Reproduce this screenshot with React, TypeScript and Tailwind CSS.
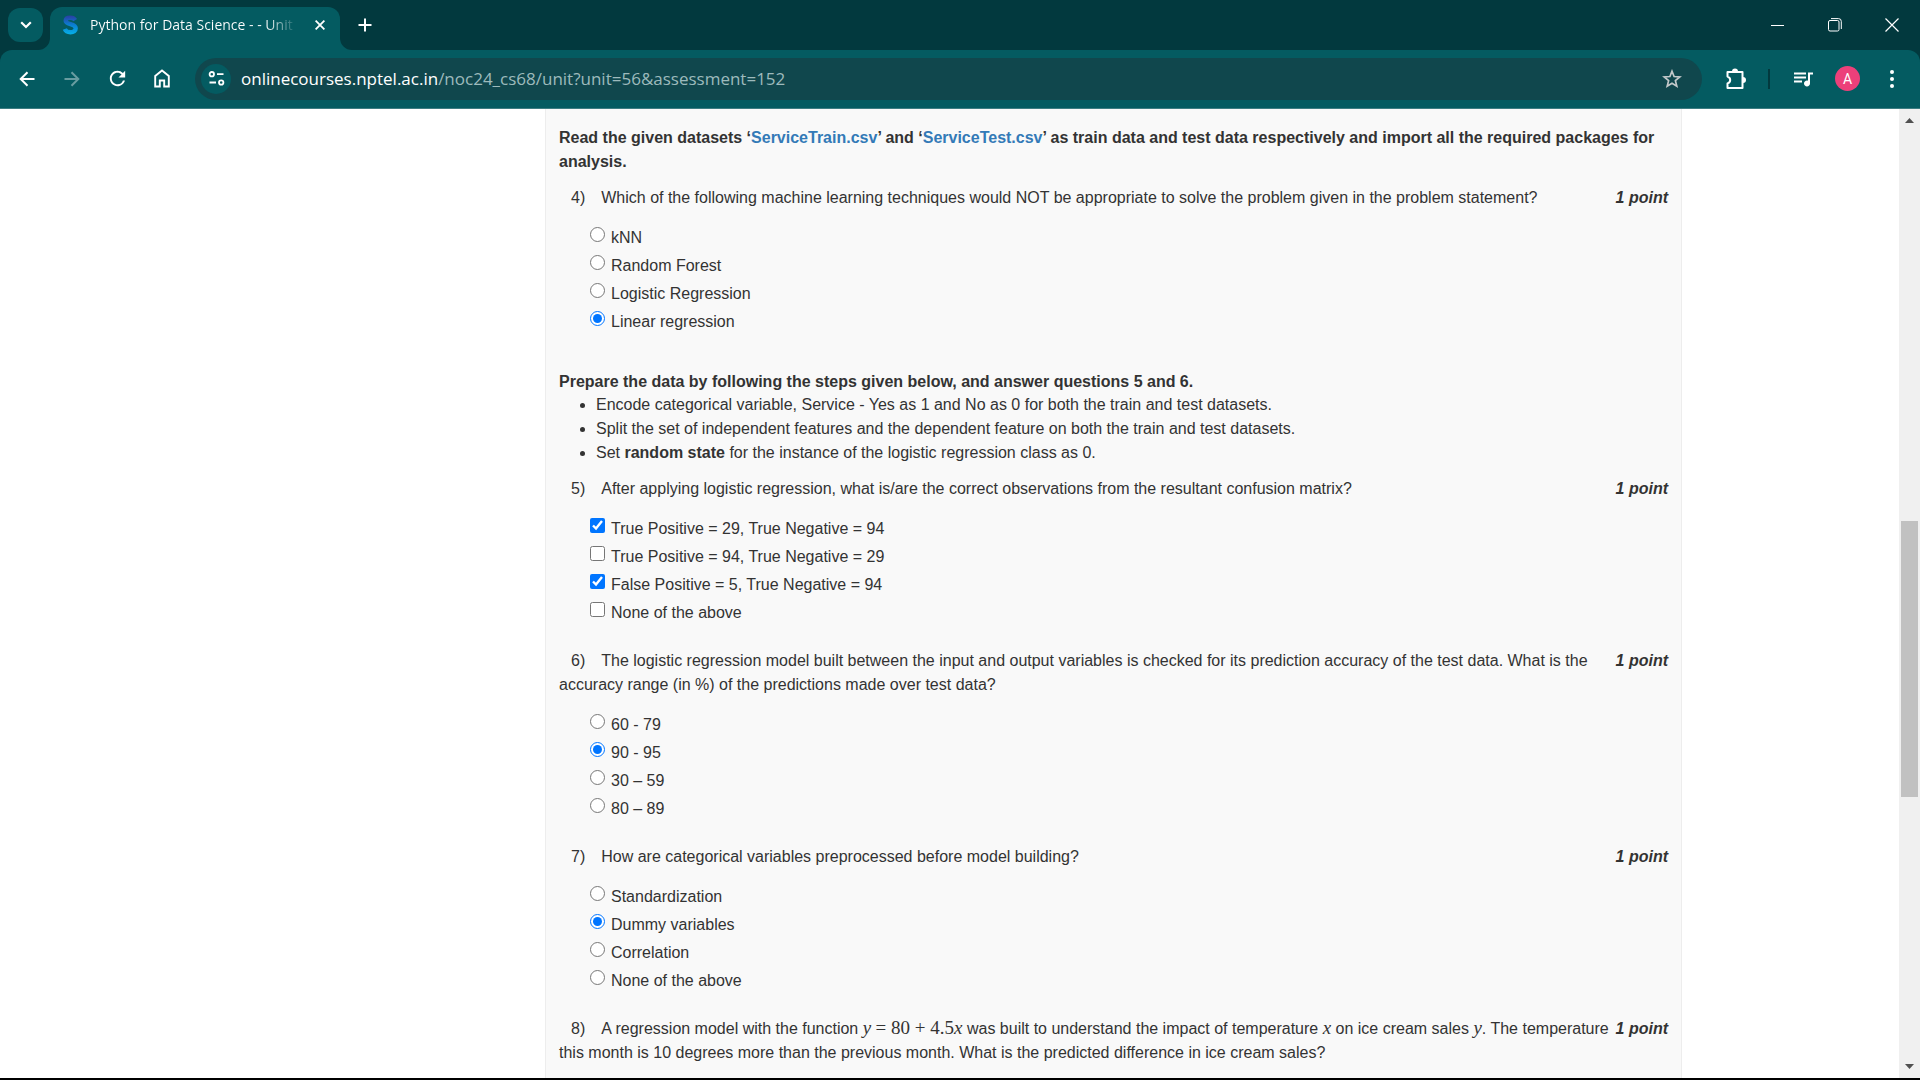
import React from "react";
import { MdQueueMusic, MdRefresh } from "react-icons/md";

type Option = { text: string; checked?: boolean };

function IconButton({ label, className = "", children }: { label: string; className?: string; children: React.ReactNode }) {
  return (
    <button type="button" aria-label={label} className={`flex shrink-0 items-center justify-center text-white ${className}`}>
      {children}
    </button>
  );
}

function TitleBar() {
  return (
    <header className="flex h-[50px] shrink-0 items-start bg-[#02393e] pl-2">
      <IconButton label="Search tabs" className="mt-2 h-[34px] w-[35px] rounded-xl bg-[#045b61]">
        <svg width="12" height="8" viewBox="0 0 12 8" fill="none" stroke="currentColor" strokeWidth="2.2">
          <path d="M1.2 1.2 6 6l4.800-4.800" />
        </svg>
      </IconButton>
      <div className="relative ml-[7px] mt-[7px] flex h-[43px] w-[290px] shrink-0 items-center rounded-t-xl bg-[#045b61] pb-[7px] pl-3 pr-[13px]">
        <svg className="absolute -left-3 bottom-0" width="12" height="12" viewBox="0 0 12 12" fill="#045b61">
          <path d="M12 0v12H0A12 12 0 0 0 12 0Z" />
        </svg>
        <svg className="absolute -right-3 bottom-0" width="12" height="12" viewBox="0 0 12 12" fill="#045b61">
          <path d="M0 0v12h12A12 12 0 0 1 0 0Z" />
        </svg>
        <svg className="shrink-0" width="17" height="20" viewBox="0 0 17 20" fill="none">
          <defs>
            <linearGradient id="logo" x1="0" y1="0" x2="0" y2="20" gradientUnits="userSpaceOnUse">
              <stop offset="0" stopColor="#2c3aa0" />
              <stop offset="0.5" stopColor="#0a7fd0" />
              <stop offset="1" stopColor="#06b4ea" />
            </linearGradient>
          </defs>
          <path d="M13.200 5.200C12 3.300 10.300 2.800 8.200 2.800c-2.600 0-4.500 1-4.500 3 0 4.400 10 2.400 10 7.400 0 2.500-2.200 4-5.200 4-2.800 0-4.800-1-5.700-3.200" stroke="url(#logo)" strokeWidth="4.400" />
        </svg>
        <span className="ml-[11px] min-w-0 flex-1 overflow-hidden whitespace-nowrap bg-linear-to-r from-white from-85% to-transparent bg-clip-text font-['Open_Sans','Noto_Sans',sans-serif] text-[14px] leading-6 text-transparent">
          Python for Data Science - - Unit
        </span>
        <IconButton label="Close tab" className="ml-4 size-[14px]">
          <svg width="10" height="10" viewBox="0 0 10 10" stroke="currentColor" strokeWidth="1.800">
            <path d="m.6.6 8.800 8.800M9.400.6.6 9.400" />
          </svg>
        </IconButton>
      </div>
      <IconButton label="New tab" className="ml-[18px] mt-[18px] size-[14px]">
        <svg width="14" height="14" viewBox="0 0 14 14" stroke="currentColor" strokeWidth="2">
          <path d="M7 .5v13M.5 7h13" />
        </svg>
      </IconButton>
      <div className="ml-auto flex h-[50px] items-center">
        <IconButton label="Minimize" className="h-full w-[57px]">
          <svg width="13" height="13" viewBox="0 0 13 13" stroke="currentColor">
            <path d="M0 6.500h13" />
          </svg>
        </IconButton>
        <IconButton label="Restore" className="h-full w-[57px]">
          <svg width="14" height="14" viewBox="0 0 14 14" fill="none" stroke="currentColor">
            <rect x=".5" y="2.500" width="10.500" height="10.500" rx="1.500" />
            <path d="M3 .6h7.500a2.800 2.800 0 0 1 2.800 2.800v7.600" />
          </svg>
        </IconButton>
        <IconButton label="Close" className="h-full w-[57px]">
          <svg width="14" height="14" viewBox="0 0 14 14" stroke="currentColor" strokeWidth="1.200">
            <path d="m.5.5 13 13M13.500.5l-13 13" />
          </svg>
        </IconButton>
      </div>
    </header>
  );
}

function Toolbar() {
  return (
    <div className="shrink-0 bg-[#02393e]">
      <nav className="flex h-[59px] items-center rounded-t-xl border-b border-[#3c7d82] bg-[#045b61] pb-px">
        <IconButton label="Back" className="ml-[17px] size-5">
          <svg width="16" height="16" viewBox="0 0 16 16" fill="none" stroke="currentColor" strokeWidth="2">
            <path d="M15.500 8H2M8.500 1.200 1.700 8l6.800 6.800" />
          </svg>
        </IconButton>
        <IconButton label="Forward" className="ml-[25px] size-5 opacity-40">
          <svg width="16" height="16" viewBox="0 0 16 16" fill="none" stroke="currentColor" strokeWidth="2">
            <path d="M.5 8H14M7.500 1.200 14.300 8l-6.800 6.800" />
          </svg>
        </IconButton>
        <IconButton label="Reload" className="ml-[23px] size-6">
          <MdRefresh size={23} />
        </IconButton>
        <IconButton label="Home" className="ml-[23px] size-5">
          <svg width="16" height="19" viewBox="0 0 16 19" fill="none" stroke="currentColor" strokeWidth="1.900">
            <path d="M1.200 17.500V7L8 1.500 14.800 7v10.500h-4.600v-6H5.800v6Z" />
          </svg>
        </IconButton>
        <div className="ml-[23px] flex h-[42px] min-w-0 flex-1 items-center rounded-full bg-[#10474d] pl-1.5 pr-5">
          <IconButton label="View site information" className="size-[30px] rounded-full bg-[#045b61]">
            <svg width="17" height="15" viewBox="0 0 17 15" fill="none" stroke="currentColor" strokeWidth="1.800">
              <circle cx="3.800" cy="3.200" r="2.200" />
              <path d="M9 3.200h6.500M1.500 11.500H8" />
              <circle cx="13.200" cy="11.500" r="2.200" />
            </svg>
          </IconButton>
          <div className="ml-[10px] min-w-0 flex-1 truncate font-['Open_Sans','Noto_Sans',sans-serif] text-[17px] leading-6 text-[#9dbabc]">
            <span className="text-white">onlinecourses.nptel.ac.in</span>/noc24_cs68/unit?unit=56&amp;assessment=152
          </div>
          <IconButton label="Bookmark this tab" className="size-5">
            <svg width="20" height="20" viewBox="0 0 20 20" fill="none" stroke="#c3c9ca" strokeWidth="1.700">
              <path d="m10 2.200 2.100 5.300 5.700.4-4.400 3.700 1.400 5.600-4.800-3-4.800 3 1.400-5.600L2.200 7.900l5.700-.4Z" />
            </svg>
          </IconButton>
        </div>
        <IconButton label="Extensions" className="ml-[23px] size-[22px]">
          <svg width="22" height="22" viewBox="0 0 22 22" fill="none" stroke="currentColor" strokeWidth="2">
            <path d="M2.500 4h15v16h-15v-4.600c3.600-1.100 3.600-5.700 0-6.800Z" strokeLinejoin="round" />
            <path d="M7 3.500a3 3 0 0 1 6 0ZM18 9a3 3 0 0 1 0 6Z" fill="currentColor" stroke="none" />
          </svg>
        </IconButton>
        <span className="ml-[21px] h-5 w-0.5 shrink-0 bg-[#02393e]" />
        <IconButton label="Media controls" className="ml-[21px] size-6">
          <MdQueueMusic size={25} />
        </IconButton>
        <IconButton label="Profile" className="ml-5 size-[25px] rounded-full bg-[#ec407a] font-[Roboto,sans-serif] text-[14px] leading-none">
          A
        </IconButton>
        <IconButton label="Menu" className="ml-5 mr-4 size-6">
          <svg width="4" height="18" viewBox="0 0 4 18" fill="currentColor">
            <circle cx="2" cy="2" r="2" />
            <circle cx="2" cy="9" r="2" />
            <circle cx="2" cy="16" r="2" />
          </svg>
        </IconButton>
      </nav>
    </div>
  );
}

function Question({ id, type, options, children }: { id: number; type: "radio" | "checkbox"; options: Option[]; children: React.ReactNode }) {
  return (
    <fieldset>
      <legend className="contents">
        <span className="float-right font-bold italic">1 point</span>
        <span className="block indent-3">
          <span className="mr-4">{id})</span>
          {children}
        </span>
      </legend>
      <div className="mt-3.5 pl-[31px]">
        {options.map((o) => (
          <label key={o.text} className="flex w-fit items-start gap-1.5 py-0.5">
            <input type={type} name={`q${id}`} defaultChecked={o.checked} className="m-0 mt-px size-[15px]" />
            {o.text}
          </label>
        ))}
      </div>
    </fieldset>
  );
}

function MathText({ italic = false, children }: { italic?: boolean; children: React.ReactNode }) {
  return <span className={`font-['Liberation_Serif',serif] text-[19px] leading-none ${italic ? "italic" : ""}`}>{children}</span>;
}

function Assessment() {
  return (
    <main className="overflow-hidden border-x border-[#ededed] bg-[#f9f9f9] px-[13px] pt-[17px] text-[#333]">
      <p className="font-bold">
        Read the given datasets ‘<a href="#train" className="text-[#337ab7]">ServiceTrain.csv</a>’ and ‘
        <a href="#test" className="text-[#337ab7]">ServiceTest.csv</a>’ as train data and test data respectively and import all the required packages for analysis.
      </p>
      <div className="mt-3">
        <Question id={4} type="radio" options={[{ text: "kNN" }, { text: "Random Forest" }, { text: "Logistic Regression" }, { text: "Linear regression", checked: true }]}>
          Which of the following machine learning techniques would NOT be appropriate to solve the problem given in the problem statement?
        </Question>
      </div>
      <p className="mt-[34px] font-bold">Prepare the data by following the steps given below, and answer questions 5 and 6.</p>
      <ul className="-mt-px list-disc pl-[37px]">
        <li>Encode categorical variable, Service - Yes as 1 and No as 0 for both the train and test datasets.</li>
        <li>Split the set of independent features and the dependent feature on both the train and test datasets.</li>
        <li>Set <b>random state</b> for the instance of the logistic regression class as 0.</li>
      </ul>
      <div className="mt-3 space-y-[22px]">
        <Question
          id={5}
          type="checkbox"
          options={[
            { text: "True Positive = 29, True Negative = 94", checked: true },
            { text: "True Positive = 94, True Negative = 29" },
            { text: "False Positive = 5, True Negative = 94", checked: true },
            { text: "None of the above" },
          ]}
        >
          After applying logistic regression, what is/are the correct observations from the resultant confusion matrix?
        </Question>
        <Question id={6} type="radio" options={[{ text: "60 - 79" }, { text: "90 - 95", checked: true }, { text: "30 – 59" }, { text: "80 – 89" }]}>
          The logistic regression model built between the input and output variables is checked for its prediction accuracy of the test data. What is the accuracy range (in %) of the predictions made over test data?
        </Question>
        <Question id={7} type="radio" options={[{ text: "Standardization" }, { text: "Dummy variables", checked: true }, { text: "Correlation" }, { text: "None of the above" }]}>
          How are categorical variables preprocessed before model building?
        </Question>
        <Question id={8} type="radio" options={[]}>
          A regression model with the function{" "}
          <span className="whitespace-nowrap">
            <MathText italic>y</MathText> <MathText>= 80 + 4.5</MathText>
            <MathText italic>x</MathText>
          </span>{" "}
          was built to understand the impact of temperature <MathText italic>x</MathText> on ice cream sales <MathText italic>y</MathText>. The temperature this month is 10 degrees more than the previous month. What is the predicted difference in ice cream sales?
        </Question>
      </div>
    </main>
  );
}

function ScrollBar() {
  return (
    <div className="flex w-[21px] shrink-0 flex-col items-center bg-[#f0f0f0] py-[9px]">
      <svg width="9" height="5" viewBox="0 0 9 5" fill="#505050" className="shrink-0">
        <path d="M4.500 0 9 5H0Z" />
      </svg>
      <div className="flex min-h-0 w-full flex-1 flex-col items-center">
        <div className="grow-[398]" />
        <div className="w-[17px] grow-[276] bg-[#c1c1c1]" />
        <div className="grow-[267]" />
      </div>
      <svg width="9" height="5" viewBox="0 0 9 5" fill="#505050" className="shrink-0">
        <path d="M0 0h9L4.500 5Z" />
      </svg>
    </div>
  );
}

export default function App() {
  return (
    <div className="flex h-screen flex-col overflow-hidden border-b-2 border-black bg-white font-['Liberation_Sans',Arial,sans-serif] text-[16px] leading-6">
      <TitleBar />
      <Toolbar />
      <div className="flex min-h-0 flex-1">
        <div className="grid min-w-0 flex-1 grid-cols-[545fr_1137fr_217fr] overflow-hidden">
          <div />
          <Assessment />
          <div />
        </div>
        <ScrollBar />
      </div>
    </div>
  );
}
